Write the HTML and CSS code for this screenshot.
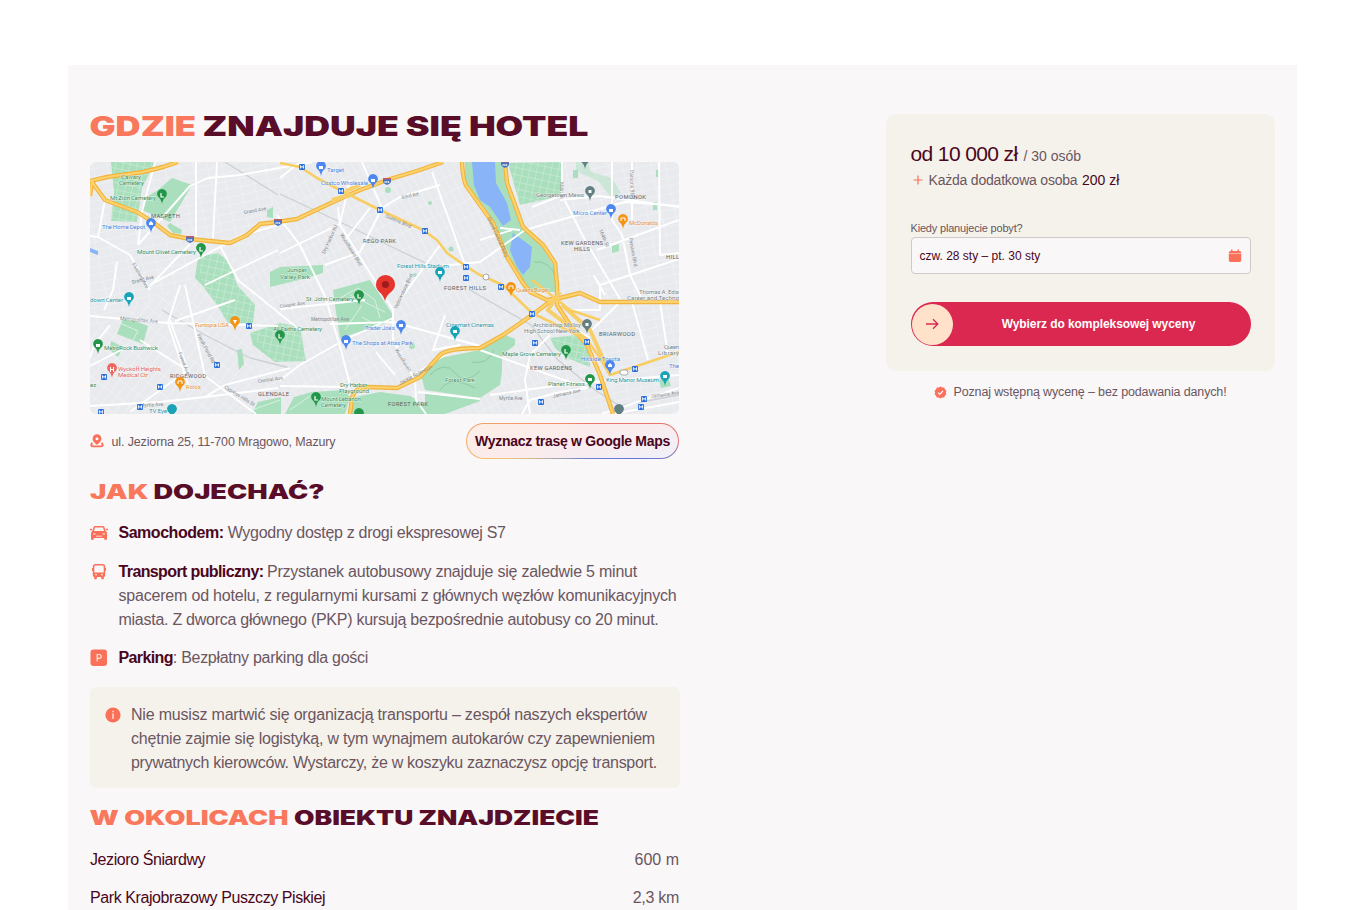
FILE: index.html
```html
<!DOCTYPE html>
<html lang="pl">
<head>
<meta charset="utf-8">
<title>Hotel – lokalizacja</title>
<link rel="stylesheet" href="styles.css">
</head>
<body>
<main class="panel">
  <section class="details">
    <h2 class="title title-main">
      <svg viewBox="90 108 500 38" width="500" height="38"><text class="accent" x="89.500" y="136" textLength="106.500" lengthAdjust="spacingAndGlyphs">GDZIE</text><text x="202.500" y="136" textLength="386" lengthAdjust="spacingAndGlyphs">ZNAJDUJE SIĘ HOTEL</text></svg>
    </h2>
    <svg class="map" viewBox="90 162 589 252" width="589" height="252">
      <defs>
        <pattern id="blocks" width="7" height="15" patternUnits="userSpaceOnUse" patternTransform="rotate(-27)"><path d="M0 0H7M0 0V15" class="minor"/></pattern>
        <pattern id="blocks2" width="14" height="8" patternUnits="userSpaceOnUse" patternTransform="rotate(-12)"><path d="M0 0H14M0 0V8" class="minor"/></pattern>
        <pattern id="blocks3" width="8" height="15" patternUnits="userSpaceOnUse" patternTransform="rotate(38)"><path d="M0 0H8M0 0V15" class="minor"/></pattern>
        <pattern id="plots" width="7" height="7" patternUnits="userSpaceOnUse" patternTransform="rotate(12)"><path d="M0 0H7M0 0V7" stroke="#d9f0e0" stroke-width=".9" fill="none"/></pattern>
        <path id="pin" d="M0 7C-.6 4-1 3-2.600 1A4.900 4.900 0 1 1 2.600 1C1 3 .6 4 0 7Z"/>
        <g id="metro"><rect x="-3" y="-3" width="6" height="6" rx="1" fill="#2a6fdb"/><path d="M-1.600 1.600V-1.500L0 .6 1.600-1.500V1.600" fill="none" stroke="#fff" stroke-width=".9"/></g>
        <g id="shield"><path d="M-4-3H4V1Q3 3 0 4Q-3 3-4 1Z" fill="#4777c4"/><path d="M-4-3H4V-1.400H-4Z" fill="#c65b60"/><path d="M-2.500 1H2.500" stroke="#fff" stroke-width="1.400" stroke-dasharray="1.200 .5"/></g>
      </defs>
      <rect x="90" y="162" width="589" height="252" fill="#e8eaed"/>
      <path d="M90 162H300L240 255 90 330Z" fill="url(#blocks2)"/>
      <path d="M90 330L240 255 260 414H90Z" fill="url(#blocks3)"/>
      <path d="M300 162H560V414H260L240 255Z" fill="url(#blocks)"/>
      <path d="M560 162H679V414H560Z" fill="url(#blocks2)"/>
      <g class="park">
        <path d="M111 162H155L142 188 137 222 111 221 114 192Z"/>
        <path d="M172 178L192 185 170 222 142 210 147 197 158 190Z"/>
        <path d="M170 223L182 230 181 234 173 233 167 226Z"/>
        <path d="M198 257L218 253 230 262 237 285 255 305 253 323 228 323 217 305 202 285 195 278Z"/>
        <path d="M270 272L280 267 323 265V273L303 279 270 287Z"/>
        <path d="M333 290L370 280 393 315 390 322 340 338 335 305Z"/>
        <path d="M250 333L280 323 300 327 306 361 275 362 253 345Z"/>
        <path d="M124 317L148 326 143 344 117 334ZM111 341L123 347 118 357 110 350Z"/>
        <path d="M420 372L440 358 480 350 503 334 515 339 515 345 502 355V371L500 385 480 398 425 390Z"/>
        <path d="M350 414L355 397 380 392 410 396 425 405 430 414Z"/>
        <path d="M425 392L479 399 480 401 445 414H425ZM252 414L258 402 281 397V414ZM285 414L294 397 312 392 345 390 350 397 345 414Z"/>
        <path d="M550 338L577 335 590 352 590 367 567 358 555 348Z"/>
        <path d="M465 162H505L510 190 522 228 543 248 556 270V292H525L507 250 485 208 465 184Z"/>
        <path d="M508 163L561 162V196L520 205Z"/>
        <path d="M576 162H588L591 172 612 178 621 193 611 197 598 181 576 171Z" opacity=".45"/>
        <path d="M573 170h5v8h-5zM653 202h4v8h-4zM656 170h3v7h-3zM612 246l7-2v7l-7 2zM267 210l6-3v11l-6-1zM237 350l5-1 2 15-5 6zM659 380l9-3 3 9-10 2z"/>
        <circle cx="415" cy="275" r="2"/><circle cx="430" cy="203" r="2"/><circle cx="388" cy="190" r="3"/><circle cx="412" cy="346" r="3"/><circle cx="451" cy="249" r="2.500"/>
      </g>
      <path d="M111 162H155L142 188 137 222 111 221ZM198 257L218 253 230 262 237 285 255 305 253 323 228 323 202 285ZM508 163L561 162V196L520 205ZM250 333L280 323 300 327 306 361 275 362ZM550 338L577 335 590 352 590 367 567 358Z" fill="url(#plots)"/>
      <path d="M340 298L358 288 375 300 380 318M345 330L362 305M350 295L385 312M362 317L378 326M252 410L280 400M290 410L310 396M120 323L138 331 132 342" class="walk"/>
      <path d="M430 375Q445 360 455 373T480 371M440 390Q450 375 475 388M472 362Q488 365 494 350M534 262Q550 260 556 278" class="trail"/>
      <g fill="#89b4f8">
        <path d="M472 162H495L496 183 507 203 511 220 503 226 490 207 480 200 474 185Z"/>
        <path d="M513 233L532 247 530 267 523 275 517 267 510 250Z"/>
        <path d="M90 248l8 3v4l-8-3z"/>
      </g>
      <path d="M280 194L340 222 392 247 438 269M162 310L205 335 250 358 290 368M470 290L531 325 558 360 595 390 620 406 679 395M225 162L278 195" class="rail"/>
      <g class="road">
        <path d="M105 200L98 237 130 255 150 290M90 236L98 237M155 162L142 212 138 245M138 245L190 186 208 178 240 175 312 162"/>
        <path d="M196 162V240M217 162 213 238M90 316L168 323 278 326M110 325L94 345 90 358M117 262L113 290 104 310M185 285L205 376 256 414M180 285L168 323 190 390M235 300L175 321M190 244L150 286M278 250L205 285M220 246L238 280 300 330M278 225L240 236 150 285"/>
        <path d="M90 406L160 402 205 397 278 388M90 366L125 348M205 397L225 385 290 368M140 340L190 372M170 320L188 370 130 412M277 215L300 245 325 296 341 350 350 385M300 162L280 178M280 253L340 224 350 180M338 207L340 225 367 268 393 310V340L415 380 416 400 426 414"/>
        <path d="M362 162L382 208 360 252 325 265M382 208L400 197 440 185M330 324L393 322 480 346M393 318L346 339 300 365 280 380M280 386L350 387M376 352L395 375M365 300L280 309M345 240L370 208M440 266L480 262 525 230 560 220 625 202 679 206M432 172L465 265M400 300L440 245M418 392L480 399M414 375L460 345 433 350 445 315"/>
        <path d="M562 162V195L585 240 620 299M560 200L600 196 679 207M612 162V220L622 235 630 275 642 299M659 162L660 255 679 253M570 310H600V285L679 259M632 162V220M597 250L679 220M560 196L532 207M620 302L592 330M632 302L648 360M660 302L668 355M480 350L550 375 587 388 560 392 530 400 522 414M550 335L530 355 525 380 530 414M490 395L560 385 679 375M602 414L679 388M613 414L679 402M560 320L590 338M600 285 594 276 605 295M480 240L512 230M500 228L520 230"/>
      </g>
      <g class="highway-edge">
        <path id="h1" d="M90 181L107 177 143 172 163 167 178 162M90 196 92 182 105 200 137 212 153 222 170 235 190 239 230 243 247 235 260 224 277 222 297 219 333 202 360 190 390 179 420 170 443 162"/>
        <path id="h2" d="M462 162Q463 182 467 187L480 205 493 223 507 257 523 283 530 292 547 300 560 298"/>
        <path id="h3" d="M505 162L507 183 523 227 543 245 555 263 557 285V305L570 325 587 345 600 375 613 414"/>
        <path id="h4" d="M350 414L352 398Q355 387 367 387L397 388 420 377 440 355Q448 348 480 348L503 335 532 315 552 300 580 293 600 302H679"/>
      </g>
      <g class="highway"><use href="#h1"/><use href="#h2"/><use href="#h3"/><use href="#h4"/></g>
      <path d="M332 200L350 195M346 191L360 185M560 292L548 310 587 340M562 305L590 330 608 370" stroke="#f7ce68" stroke-width="4" fill="none"/>
      <path d="M280 163L300 167 317 178 340 190 380 210 423 230 437 240 447 253 467 267 480 275 503 285 532 313 557 325 587 340 600 358 610 375 640 365 679 352M532 280L570 310 600 320" class="avenue"/>
      <g class="place">
        <text x="151" y="218" textLength="29">MASPETH</text><text x="363" y="243" textLength="33">REGO PARK</text><text x="615" y="199" textLength="31">POMONOK</text>
        <text x="561" y="245" textLength="42">KEW GARDENS</text><text x="574" y="251" textLength="16">HILLS</text><text x="666" y="259" textLength="13">HILL</text><text x="444" y="290" textLength="42">FOREST HILLS</text>
        <text x="170" y="378" textLength="36">RIDGEWOOD</text><text x="258" y="396" textLength="31">GLENDALE</text><text x="388" y="406" textLength="40">FOREST PARK</text><text x="599" y="336" textLength="36">BRIARWOOD</text><text x="530" y="370" textLength="42">KEW GARDENS</text>
      </g>
      <g class="lbl green">
        <text x="121" y="179" textLength="20">Calvary</text><text x="119" y="185" textLength="25">Cemetery</text><text x="110" y="200" textLength="46">Mt Zion Cemetery</text><text x="137" y="254" textLength="59">Mount Olivet Cemetery</text><text x="287" y="272" textLength="20">Juniper</text><text x="280" y="279" textLength="30">Valley Park</text>
        <text x="306" y="301" textLength="48">St. John Cemetery</text><text x="273" y="331" textLength="49">All Faiths Cemetery</text><text x="104" y="350" textLength="54">MetroRock Bushwick</text><text x="340" y="387" textLength="27">Dry Harbor</text><text x="339" y="393" textLength="30">Playground</text><text x="321" y="401" textLength="40">Mount Lebanon</text><text x="321" y="407" textLength="25">Cemetery</text>
        <text x="445" y="382" textLength="30">Forest Park</text><text x="502" y="356" textLength="59">Maple Grove Cemetery</text><text x="548" y="386" textLength="37">Planet Fitness</text><text x="90" y="387">ez</text>
      </g>
      <g class="lbl teal"><text x="397" y="268" textLength="52">Forest Hills Stadium</text><text x="90" y="302" textLength="33">down Center</text><text x="149" y="413" textLength="18">TV Eye</text><text x="446" y="327" textLength="48">Cinemart Cinemas</text><text x="606" y="382" textLength="53">King Manor Museum</text></g>
      <g class="lbl blue"><text x="102" y="229" textLength="43">The Home Depot</text><text x="327" y="172" textLength="17">Target</text><text x="321" y="185" textLength="47">Costco Wholesale</text><text x="573" y="215" textLength="34">Micro Center</text><text x="365" y="330" textLength="30">Trader Joe's</text><text x="352" y="345" textLength="61">The Shops at Atlas Park</text><text x="581" y="361" textLength="39">Hillside Toyota</text><text x="669" y="368" textLength="10">The</text></g>
      <g class="lbl orange"><text x="195" y="327" textLength="34">Funtopia USA</text><text x="186" y="389" textLength="15">Rolo's</text><text x="516" y="292" textLength="33">Queens Burger</text><text x="629" y="225" textLength="29">McDonald's</text></g>
      <g class="lbl red"><text x="118" y="371" textLength="43">Wyckoff Heights</text><text x="118" y="377" textLength="30">Medical Ctr</text></g>
      <g class="lbl grey"><text x="536" y="197" textLength="48">Georgetown Mews</text><text x="639" y="294" textLength="40">Thomas A. Edis</text><text x="627" y="300" textLength="52">Career and Techno</text><text x="533" y="327" textLength="48">Archbishop Molloy</text><text x="524" y="333" textLength="56">High School New York</text><text x="664" y="349" textLength="15">Queen</text><text x="658" y="355" textLength="21">Library</text></g>
      <g class="street">
        <text transform="translate(385 217) rotate(24)">Queens Blvd</text><text transform="translate(402 199) rotate(-12)">63rd Rd</text><text transform="translate(120 320) rotate(5)">Metropolitan Ave</text>
        <text transform="translate(132 284) rotate(-14)">Grand Ave</text><text transform="translate(244 214) rotate(-10)">Grand Ave</text><text transform="translate(197 335) rotate(62)">Fresh Pond Rd</text><text transform="translate(340 235) rotate(58)">Woodhaven Blvd</text><text transform="translate(325 254) rotate(-66)">Dry Harbor Rd</text><text transform="translate(280 308) rotate(-8)">Cooper Ave</text><text transform="translate(311 321)">Metropolitan Ave</text>
        <text transform="translate(140 407) rotate(-3)">Myrtle Ave</text><text transform="translate(178 353) rotate(68)">Forest Ave</text><text transform="translate(258 383) rotate(-8)">Central Ave</text><text transform="translate(224 388) rotate(32)">Cypress Hills St</text><text transform="translate(400 385) rotate(-28)">Jackie Robinson</text><text transform="translate(395 350) rotate(58)">Woodhaven</text><text transform="translate(487 218) rotate(65)">Grand Central Pkwy</text><text transform="translate(630 170) rotate(88)">Parsons Blvd</text><text transform="translate(629 238) rotate(80)">Parsons Blvd</text><text transform="translate(553 398) rotate(-12)">Jamaica Ave</text><text transform="translate(499 400)">Myrtle Ave</text><text transform="translate(651 398) rotate(-8)">Jamaica Ave</text><text transform="translate(560 182) rotate(88)">Main St</text><text transform="translate(599 230) rotate(68)">164th St</text><text transform="translate(132 264) rotate(60)">Flushing Ave</text><text transform="translate(397 309) rotate(-65)">Yellowstone Blvd</text>
      </g>
      <g fill="#24964a"><use href="#pin" x="162" y="197"/><use href="#pin" x="201" y="251"/><use href="#pin" x="359" y="298"/><use href="#pin" x="280" y="338"/><use href="#pin" x="98" y="347"/><use href="#pin" x="316" y="400"/><use href="#pin" x="566" y="353"/><use href="#pin" x="590" y="382"/><use href="#pin" x="359" y="416"/></g>
      <g fill="#18a4b6"><use href="#pin" x="129" y="300"/><use href="#pin" x="440" y="275"/><use href="#pin" x="455" y="334"/><use href="#pin" x="172" y="412"/><use href="#pin" x="665" y="379"/></g>
      <g fill="#4b87ee"><use href="#pin" x="151" y="226"/><use href="#pin" x="321" y="169"/><use href="#pin" x="373" y="182"/><use href="#pin" x="611" y="212"/><use href="#pin" x="401" y="328"/><use href="#pin" x="346" y="343"/><use href="#pin" x="610" y="368"/></g>
      <g fill="#f29416"><use href="#pin" x="235" y="324"/><use href="#pin" x="180" y="385"/><use href="#pin" x="511" y="290"/><use href="#pin" x="623" y="222"/></g>
      <g fill="#627f83"><use href="#pin" x="590" y="194"/><use href="#pin" x="585" y="162"/><use href="#pin" x="587" y="327"/><use href="#pin" x="619" y="412"/></g>
      <use href="#pin" x="112" y="371" fill="#ee675f"/>
      <path d="M161 193v4h3M200 247v4h3M358 294v4h3M279 334v4h3M315 396v4h3M565 349v4h3" stroke="#fff" stroke-width="1.200" fill="none"/>
      <path d="M96 344h4v3h-4zM588 378h4v3h-4zM127 297h4v3h-4zM438 271h4v3h-4zM453 330h4v3h-4zM663 375h4v3h-4zM149 223l2-2 2 2v2h-4zM319 166h4v3h-4zM371 179h4v3h-4zM609 209h4v3h-4zM399 324h4v3h-4zM344 340h4v3h-4zM608 365l2-2 2 2v2h-4zM233 320h4l-2 4zM585.500 323h3v3h-3zM588.500 190h3v3h-3z" fill="#fff"/>
      <path d="M178 384v-3h4v3M509 289v-3h4v3M621 221v-3h4v3M110.500 367v5M113.500 367v5M110.500 369.500h3" stroke="#fff" stroke-width="1" fill="none"/>
      <use href="#metro" x="302" y="167"/><use href="#metro" x="341" y="191"/><use href="#metro" x="380" y="210"/><use href="#metro" x="425" y="231"/><use href="#metro" x="466" y="267"/><use href="#metro" x="466" y="278"/><use href="#metro" x="501" y="287"/><use href="#metro" x="532" y="314"/><use href="#metro" x="535" y="343"/><use href="#metro" x="587" y="342"/><use href="#metro" x="541" y="402"/><use href="#metro" x="599" y="387"/><use href="#metro" x="635" y="369"/><use href="#metro" x="644" y="399"/><use href="#metro" x="641" y="407"/><use href="#metro" x="249" y="326"/><use href="#metro" x="217" y="365"/><use href="#metro" x="160" y="387"/><use href="#metro" x="140" y="407"/><use href="#metro" x="104" y="377"/><use href="#metro" x="101" y="412"/>
      <use href="#shield" x="190" y="239"/><use href="#shield" x="278" y="222"/><use href="#shield" x="387" y="181"/><use href="#shield" x="505" y="164"/>
      <g fill="#fff" stroke="#858a8f" stroke-width=".7"><circle cx="486" cy="277" r="3"/><rect x="620" y="370" width="8" height="5" rx="2.500"/></g>
      <path d="M385 301C383 292 376 292 376 284.500A9.500 9.500 0 0 1 395 284.500C395 292 387 292 385 301Z" fill="#e5352c"/><circle cx="385.500" cy="284.500" r="3.600" fill="#a11a1d"/>
    </svg>
    <div class="place-row">
      <svg class="ico-pin" viewBox="0 0 14 14" width="14" height="14"><path d="M2.200 8.800Q.2 12.400 2.600 12.400H11.400Q13.800 12.400 11.800 8.800" fill="none" stroke="currentColor" stroke-width="1.900"/><path d="M7 11C5.500 9 2.600 7.700 2.600 4.700A4.400 4.400 0 0 1 11.400 4.700C11.400 7.700 8.500 9 7 11Z" fill="currentColor"/><circle cx="7" cy="4.700" r="1.500" fill="#f9f7f8"/></svg>
      <span class="address">ul. Jeziorna 25, 11-700 Mrągowo, Mazury</span>
      <a class="route">Wyznacz trasę w Google Maps</a>
    </div>
    <h3 class="title title-sub">
      <svg viewBox="90 477 520 30" width="520" height="30"><text class="accent" x="90" y="499" textLength="58.500" lengthAdjust="spacingAndGlyphs">JAK</text><text x="153.500" y="499" textLength="171" lengthAdjust="spacingAndGlyphs">DOJECHAĆ?</text></svg>
    </h3>
    <ul class="ways">
      <li>
        <svg viewBox="0 0 18 18" width="18" height="18"><path d="M0 5.500H2M16 5.500H18" stroke="currentColor" stroke-width="1.300"/><path fill="currentColor" fill-rule="evenodd" d="M5 2H13Q14 2 14.400 3L15.700 7Q17 7.800 17 9.500V14.500Q17 16 15.600 16T14.200 14.500V14H3.800V14.500Q3.800 16 2.400 16T1 14.500V9.500Q1 7.800 2.300 7L3.600 3Q4 2 5 2ZM5 3.500 4 7H14L13 3.500ZM3 9.500V10.500H5.500V9.500ZM12.500 9.500V10.500H15V9.500ZM6 11.700V12.400H12V11.700Z"/></svg>
        <p class="s25"><b class="s48">Samochodem:</b> <span class="s30">Wygodny dostęp z drogi ekspresowej S7</span></p>
      </li>
      <li>
        <svg viewBox="0 0 18 18" width="18" height="18"><path fill="currentColor" fill-rule="evenodd" d="M5 1H13Q15.200 1 15.200 3.500V5H16V8H15.200V12Q15.200 13.800 13.800 14V16.200H11.500L11 14H7L6.500 16.200H4.200V14Q2.800 13.800 2.800 12V8H2V5H2.800V3.500Q2.800 1 5 1ZM4.300 4V9.500H13.700V4Q13.700 2.600 12.500 2.600H5.500Q4.300 2.600 4.300 4ZM5 11.300V12.300H7V11.300ZM11 11.300V12.300H13V11.300Z"/></svg>
        <p><b class="s62">Transport publiczny:</b><span class="s23 after">Przystanek autobusowy znajduje się zaledwie 5 minut</span><br><span class="s20">spacerem od hotelu, z regularnymi kursami z głównych węzłów komunikacyjnych</span><br><span class="s26">miasta. Z dworca głównego (PKP) kursują bezpośrednie autobusy co 20 minut.</span></p>
      </li>
      <li>
        <svg viewBox="0 0 18 18" width="18" height="18"><rect x=".5" y=".5" width="16.500" height="16.500" rx="3" fill="currentColor"/><path d="M7.200 12.500V5.500H9.200Q11.200 5.500 11.200 7.400T9.200 9.300H7.200" fill="none" stroke="#ffe9df" stroke-width="1.200"/></svg>
        <p><b class="s62">Parking</b><span class="s30">: Bezpłatny parking dla gości</span></p>
      </li>
    </ul>
    <aside class="note">
      <svg viewBox="0 0 16 16" width="16" height="16"><circle cx="8" cy="8" r="7.600" fill="currentColor"/><path d="M8 3.700V5.200M8 6.600V12" stroke="#ffe9df" stroke-width="1.400"/></svg>
      <p><span class="s20">Nie musisz martwić się organizacją transportu – zespół naszych ekspertów</span><br><span class="s21">chętnie zajmie się logistyką, w tym wynajmem autokarów czy zapewnieniem</span><br><span class="s28">prywatnych kierowców. Wystarczy, że w koszyku zaznaczysz opcję transport.</span></p>
    </aside>
    <h3 class="title title-near">
      <svg viewBox="90 803 520 30" width="520" height="30"><text class="accent" x="89.500" y="825" textLength="199" lengthAdjust="spacingAndGlyphs">W OKOLICACH</text><text x="294" y="825" textLength="305" lengthAdjust="spacingAndGlyphs">OBIEKTU ZNAJDZIECIE</text></svg>
    </h3>
    <dl class="near">
      <div><dt>Jezioro Śniardwy</dt><dd>600 m</dd></div>
      <div><dt>Park Krajobrazowy Puszczy Piskiej</dt><dd class="s30">2,3 km</dd></div>
    </dl>
  </section>
  <aside class="booking">
    <div class="card">
      <p class="price"><strong>od 10 000 zł</strong><span>/ 30 osób</span></p>
      <p class="extra"><svg viewBox="0 0 10 10" width="10" height="10"><path d="M5 .5V9.500M.5 5H9.500" stroke="currentColor" stroke-width="1.200"/></svg><span class="s21">Każda dodatkowa osoba</span><strong>200 zł</strong></p>
      <label class="label">Kiedy planujecie pobyt?</label>
      <div class="field"><span>czw. 28 sty – pt. 30 sty</span>
        <svg viewBox="0 0 14 14" width="14" height="14"><path fill="currentColor" d="M3 .5H4.500V2H9.500V.5H11V2H11.500Q13.200 2 13.200 3.700V4.500H.8V3.700Q.8 2 2.500 2H3ZM.8 5.100H13.200V11.300Q13.200 13 11.500 13H2.500Q.8 13 .8 11.300Z"/></svg>
      </div>
      <button class="cta"><i class="knob"><svg viewBox="0 0 14 14" width="14" height="14"><path d="M1 7H12.600M8 2.300 12.800 7 8 11.700" fill="none" stroke="currentColor" stroke-width="1.300"/></svg></i><span class="cta-text">Wybierz do kompleksowej wyceny</span></button>
    </div>
    <p class="promise"><svg viewBox="0 0 14 14" width="13" height="13"><path fill="currentColor" d="M7 .5 8.800 1.600 11 1.500 11.700 3.600 13.400 5 12.700 7 13.400 9 11.700 10.400 11 12.500 8.800 12.400 7 13.500 5.200 12.400 3 12.500 2.300 10.400.6 9 1.300 7 .6 5 2.300 3.600 3 1.500 5.200 1.600Z"/><path d="M4.300 7.200 6.200 9 9.700 5.300" fill="none" stroke="#fff" stroke-width="1.300"/></svg>Poznaj wstępną wycenę – bez podawania danych!</p>
  </aside>
</main>
</body>
</html>
```
FILE: styles.css
```css
* { box-sizing: border-box; }
body { margin: 0; padding: 65px 69px 0 68px; height: 910px; overflow: hidden; background: #fff; color: #6b5660; font: 16px/24px "Liberation Sans", Arial, sans-serif; white-space: nowrap; }
h2, h3, p, ul, dl, dd { margin: 0; padding: 0; }
svg { display: block; flex: none; }

/* tracking steps, in hundredths of a pixel */
.s20 { letter-spacing: -.195px; }
.s21 { letter-spacing: -.21px; }
.s23 { letter-spacing: -.226px; }
.s25 { letter-spacing: -.25px; }
.s26 { letter-spacing: -.262px; }
.s28 { letter-spacing: -.28px; }
.s30 { letter-spacing: -.295px; }
.s48 { letter-spacing: -.477px; }
.s62 { letter-spacing: -.62px; }
.after { margin-left: 3.500px; }

.panel { display: flex; justify-content: space-between; height: 845px; padding: 43px 22px 0; background: #f9f7f8; overflow: hidden; }
.details { width: 589px; }
.title svg { overflow: visible; }
.title svg text { font: 900 19.700px Inter, sans-serif; fill: #5a0d28; }
.title-main svg text { font-size: 26.500px; }
.title svg .accent { fill: #f9775c; }
.title-main { height: 54px; }

.map { border-radius: 6px; }
.minor { stroke: #f5f6f8; stroke-width: .9; fill: none; }
.park { fill: #a9dfbd; }
.walk { stroke: #d9f0e0; fill: none; }
.trail { stroke: #7cb894; stroke-width: .6; fill: none; }
.rail { stroke: #cdd0d3; stroke-width: 1.300; fill: none; }
.road { stroke: #fff; stroke-width: 1.900; fill: none; stroke-linejoin: round; }
.highway-edge { stroke: #f2b33c; stroke-width: 4.400; fill: none; stroke-linejoin: round; }
.highway { stroke: #fbd26d; stroke-width: 2.200; fill: none; }
.avenue { stroke: #f8cd62; stroke-width: 2.600; fill: none; stroke-linejoin: round; }
.place text { font: 5.800px Roboto, sans-serif; fill: #5e6266; }
.lbl text { font: 6.200px Roboto, sans-serif; stroke: #fff; stroke-opacity: .6; stroke-width: 1px; paint-order: stroke; }
.street text { font: 5px Roboto, sans-serif; fill: #85898e; }
.green { fill: #3b8c5c; }
.teal { fill: #2a95a5; }
.blue { fill: #4b84dd; }
.orange { fill: #e39136; }
.red { fill: #e0635c; }
.grey { fill: #74848a; }

.place-row { display: flex; align-items: center; height: 36px; margin-top: 9px; font-size: 12.500px; }
.ico-pin, .ways svg, .note svg, .extra svg, .field svg, .promise svg { color: #fb7059; }
.address { margin-left: 7.500px; padding-top: 2px; letter-spacing: -.13px; }
.route { display: flex; align-items: center; justify-content: center; width: 213px; height: 36px; margin-left: auto; border: 1.500px solid transparent; border-radius: 18px; color: #4a0620; font-size: 14px; font-weight: 700; letter-spacing: -.289px; background: linear-gradient(165deg, #fdeee7, #fbebeb 45%, #f0f0f9) padding-box, conic-gradient(from 90deg, #e8706f, #8f78ba 2%, #5f78d8 4%, #6d84d2 15%, #b3a9a8 40%, #f0c274 46%, #f3ae6c 50%, #f3966c 56%, #ee7c6c 80%, #e8706f) border-box; }
.title-sub { height: 44px; margin-top: 18px; }
.ways { display: flex; flex-direction: column; gap: 14.500px; list-style: none; }
.ways li { display: flex; gap: 10.500px; }
.ways svg { margin-top: 3px; }
.ways b { color: #4a0620; }
.note { display: flex; gap: 10px; width: 590px; height: 101px; margin-top: 17px; padding: 16px 15px; background: #f5f2ec; border-radius: 6px; }
.note svg { margin-top: 4px; }
.title-near { height: 45px; margin-top: 15px; }
.near { display: flex; flex-direction: column; gap: 14px; }
.near div { display: flex; justify-content: space-between; }
.near dt { color: #4a0620; letter-spacing: -.42px; }

.booking { width: 389px; margin-top: 6px; }
.card { height: 257px; padding: 24px 24.500px 0; background: #f5f2eb; border-radius: 10px; }
.price { display: flex; align-items: baseline; gap: 6px; height: 32px; line-height: 32px; font-size: 14px; }
.price strong { color: #4a0620; font-size: 21px; font-weight: 400; letter-spacing: -.62px; }
.extra { display: flex; align-items: center; height: 20px; font-size: 14px; }
.extra svg { margin: 0 5.500px 0 2.500px; }
.extra strong { margin-left: 4.500px; color: #4a0620; font-weight: 400; }
.label { display: block; height: 16px; margin-top: 30px; font-size: 11px; line-height: 16px; letter-spacing: -.183px; }
.field { display: flex; align-items: center; justify-content: space-between; height: 37px; margin-top: 1px; padding: 0 8px; border: 1px solid #cfc9cb; border-radius: 4px; background: #f9f7f8; color: #4a0620; font-size: 12px; }
.cta { display: flex; align-items: center; width: 340px; height: 44px; margin-top: 28px; padding: 0 0 0 1px; border: 0; border-radius: 22px; background: #db2850; color: #fff; font: 700 12px "Liberation Sans", Arial, sans-serif; letter-spacing: -.078px; }
.knob { display: flex; align-items: center; justify-content: center; width: 41px; height: 41px; border-radius: 50%; background: #ffe2c9; color: #db2850; }
.cta-text { flex: 1; padding-right: 6px; text-align: center; }
.promise { display: flex; align-items: center; justify-content: center; gap: 6px; height: 20px; margin-top: 11px; font-size: 12.500px; letter-spacing: -.141px; }
```
